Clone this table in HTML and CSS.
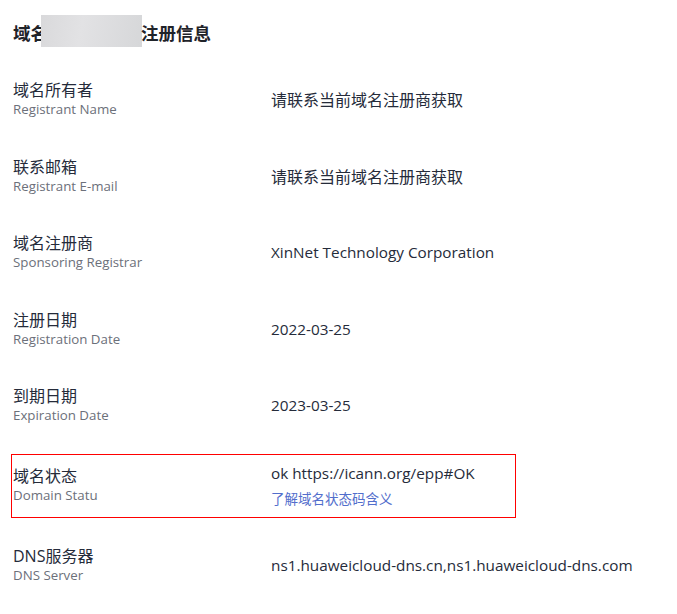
FILE: index.html
```html
<!DOCTYPE html>
<html lang="zh-CN">
<head>
<meta charset="utf-8">
<title>域名注册信息</title>
<link rel="stylesheet" href="styles.css">
</head>
<body>
<div class="panel">
  <h2 class="title">域名<span class="mask"></span>注册信息</h2>
  <div class="list">
    <div class="row">
      <div class="label"><div class="zh">域名所有者</div><div class="en">Registrant Name</div></div>
      <div class="value value--zh">请联系当前域名注册商获取</div>
    </div>
    <div class="row">
      <div class="label"><div class="zh">联系邮箱</div><div class="en">Registrant E-mail</div></div>
      <div class="value value--zh">请联系当前域名注册商获取</div>
    </div>
    <div class="row">
      <div class="label"><div class="zh">域名注册商</div><div class="en">Sponsoring Registrar</div></div>
      <div class="value">XinNet Technology Corporation</div>
    </div>
    <div class="row">
      <div class="label"><div class="zh">注册日期</div><div class="en">Registration Date</div></div>
      <div class="value">2022-03-25</div>
    </div>
    <div class="row">
      <div class="label"><div class="zh">到期日期</div><div class="en">Expiration Date</div></div>
      <div class="value">2023-03-25</div>
    </div>
    <div class="row row--highlight">
      <div class="label"><div class="zh">域名状态</div><div class="en">Domain Statu</div></div>
      <div class="value">
        <div>ok https://icann.org/epp#OK</div>
        <a class="link" href="#">了解域名状态码含义</a>
      </div>
    </div>
    <div class="row">
      <div class="label"><div class="zh">DNS服务器</div><div class="en">DNS Server</div></div>
      <div class="value">ns1.huaweicloud-dns.cn,ns1.huaweicloud-dns.com</div>
    </div>
  </div>
</div>
</body>
</html>
```
FILE: styles.css
```css
html, body {
  margin: 0;
  padding: 0;
  background: #fff;
}
body {
  font-family: "Open Sans", "Noto Sans CJK SC", sans-serif;
  color: #252b3a;
}
.panel {
  padding: 16px 13px 0 13px;
}
.title {
  margin: 0;
  display: flex;
  align-items: center;
  height: 33px;
  font-size: 17.5px;
  font-weight: 700;
  font-family: "Noto Sans CJK SC", sans-serif;
  color: #1f2329;
}
.mask {
  display: inline-block;
  width: 101px;
  height: 32px;
  margin-top: -3px;
  margin-left: -7px;
  margin-right: -1px;
  background: linear-gradient(100deg, #d9d9db 0%, #e2e2e4 40%, #d6d7d9 100%);
}
.list {
  margin-top: 31px;
  display: flex;
  flex-direction: column;
  gap: 38.5px;
}
.row {
  display: flex;
  align-items: center;
}
.label {
  width: 258px;
  flex: none;
}
.zh {
  font-family: "Open Sans", "Noto Sans CJK SC", sans-serif;
  font-size: 16px;
  line-height: 21px;
  color: #252b3a;
}
.en {
  font-size: 13.3px;
  line-height: 17px;
  color: #6c707a;
}
.value {
  font-size: 15.3px;
  line-height: 20px;
  color: #252b3a;
}
.value--zh {
  font-family: "Noto Sans CJK SC", sans-serif;
  font-size: 16px;
  line-height: 18px;
}
.link {
  display: block;
  margin-top: 5px;
  font-family: "Noto Sans CJK SC", sans-serif;
  font-size: 13.5px;
  line-height: 20px;
  color: #526ecc;
  text-decoration: none;
}
.row--highlight {
  position: relative;
}
.row--highlight::after {
  content: "";
  position: absolute;
  top: -8.5px;
  bottom: -10px;
  left: -2px;
  width: 503px;
  border: 1px solid #f00;
  pointer-events: none;
}
```
